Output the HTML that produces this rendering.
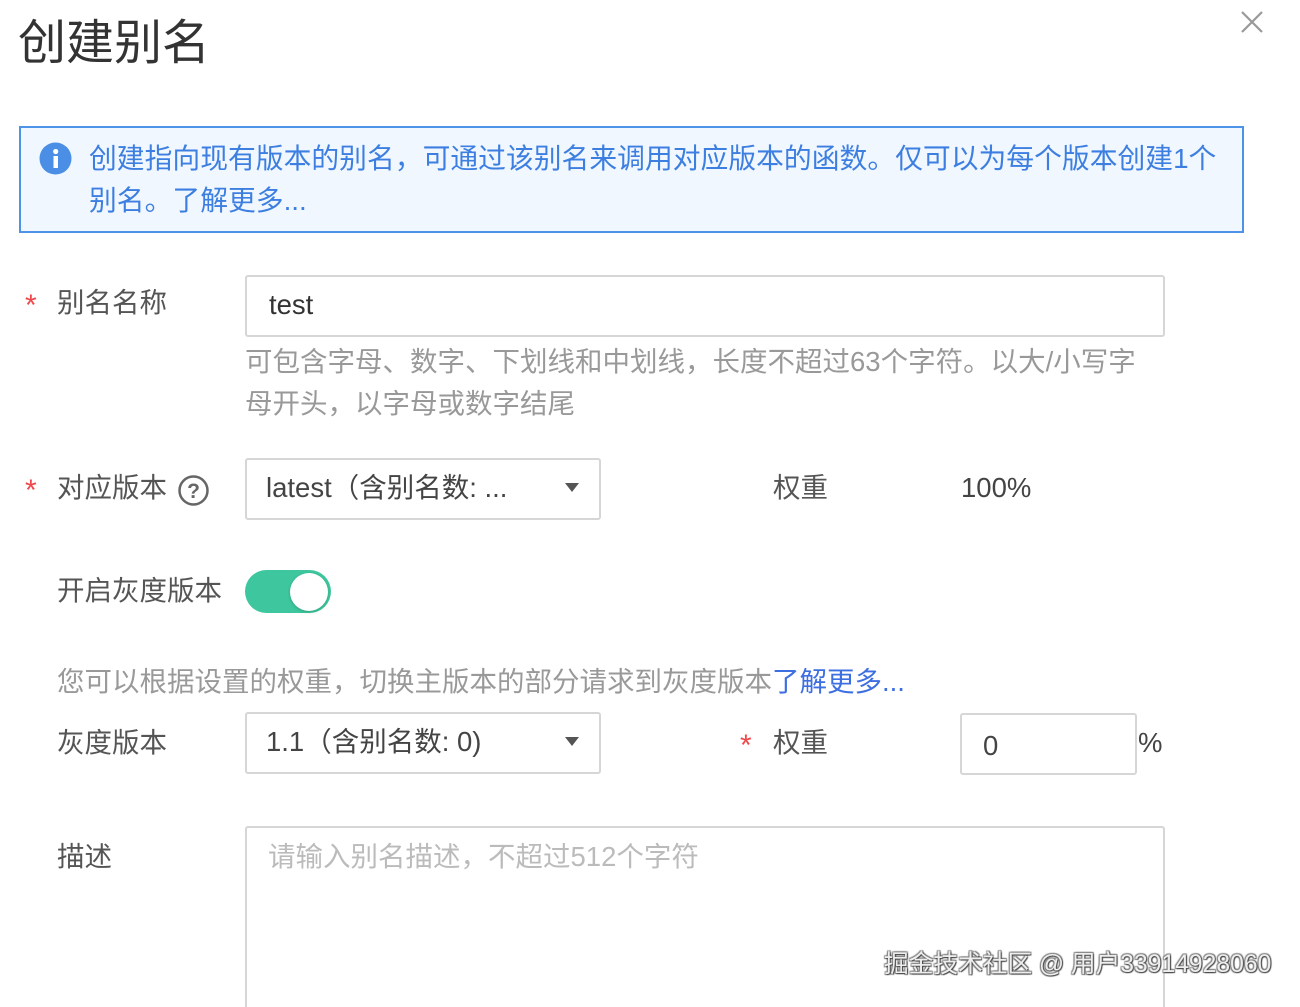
<!DOCTYPE html>
<html><head><meta charset="utf-8"><style>
*{margin:0;padding:0;box-sizing:border-box}
html,body{width:1300px;height:1007px;overflow:hidden}
body{background:#fff;position:relative;font-family:"Liberation Sans","Noto Sans CJK SC",sans-serif;color:#555;font-size:27.5px}
.a{position:absolute;white-space:nowrap;line-height:1}
.box{position:absolute;border:2px solid #d6d6d6;border-radius:3px;background:#fff}
.star{color:#f0474b;font-size:30px}
.tri{position:absolute;width:0;height:0;border-left:7px solid transparent;border-right:7px solid transparent;border-top:9px solid #555}
</style></head><body>
<div class="a" style="left:18px;top:20px;font-size:48px;color:#333">创建别名</div>
<svg class="a" style="left:1240px;top:10px" width="24" height="24"><path d="M2 2L22 22M22 2L2 22" stroke="#999" stroke-width="2.2"/></svg>
<div style="position:absolute;left:19px;top:126px;width:1225px;height:107px;border:2px solid #4d94e8;background:#f1f7ff"></div>
<svg class="a" style="left:39px;top:142px" width="33" height="33"><circle cx="16.5" cy="16.5" r="16" fill="#4a8ee6"/><rect x="14.5" y="14" width="4.5" height="12" fill="#fff"/><circle cx="16.7" cy="9.5" r="2.6" fill="#fff"/></svg>
<div class="a" style="left:89px;top:145px;font-size:27.8px;color:#3d7fe0">创建指向现有版本的别名，可通过该别名来调用对应版本的函数。仅可以为每个版本创建1个</div>
<div class="a" style="left:89px;top:187px;font-size:27.8px;color:#3d7fe0">别名。了解更多...</div>

<div class="a star" style="left:25px;top:291px">*</div>
<div class="a" style="left:57px;top:289px">别名名称</div>
<div class="box" style="left:245px;top:275px;width:920px;height:62px"></div>
<div class="a" style="left:269px;top:291px;color:#333">test</div>
<div class="a" style="left:245px;top:348px;color:#999">可包含字母、数字、下划线和中划线，长度不超过63个字符。以大/小写字</div>
<div class="a" style="left:245px;top:390px;color:#999">母开头，以字母或数字结尾</div>

<div class="a star" style="left:25px;top:476px">*</div>
<div class="a" style="left:57px;top:474px">对应版本</div>
<svg class="a" style="left:177px;top:474px" width="33" height="33"><circle cx="16.5" cy="16.5" r="14" fill="none" stroke="#666" stroke-width="2.5"/><text x="16.5" y="24" text-anchor="middle" font-size="21" font-weight="bold" fill="#666" font-family="Liberation Sans">?</text></svg>
<div class="box" style="left:245px;top:458px;width:356px;height:62px"></div>
<div class="a" style="left:266px;top:474px;color:#444">latest（含别名数: ...</div>
<div class="tri" style="left:565px;top:483px"></div>
<div class="a" style="left:773px;top:474px">权重</div>
<div class="a" style="left:961px;top:474px;color:#444">100%</div>

<div class="a" style="left:57px;top:577px">开启灰度版本</div>
<div style="position:absolute;left:245px;top:570px;width:86px;height:43px;border-radius:22px;background:#3ec79e"></div>
<div style="position:absolute;left:290px;top:573px;width:38px;height:38px;border-radius:50%;background:#fff;box-shadow:0 1px 3px rgba(0,0,0,.2)"></div>

<div class="a" style="left:57px;top:668px;color:#999">您可以根据设置的权重，切换主版本的部分请求到灰度版本<span style="color:#3d6fe0">了解更多...</span></div>

<div class="a" style="left:57px;top:729px">灰度版本</div>
<div class="box" style="left:245px;top:712px;width:356px;height:62px"></div>
<div class="a" style="left:266px;top:728px;color:#444">1.1（含别名数: 0)</div>
<div class="tri" style="left:565px;top:737px"></div>
<div class="a star" style="left:740px;top:731px">*</div>
<div class="a" style="left:773px;top:729px">权重</div>
<div class="box" style="left:960px;top:713px;width:177px;height:62px"></div>
<div class="a" style="left:983px;top:732px;color:#444">0</div>
<div class="a" style="left:1138px;top:729px;color:#444">%</div>

<div class="a" style="left:57px;top:843px">描述</div>
<div class="box" style="left:245px;top:826px;width:920px;height:181px;border-bottom:none;border-radius:3px 3px 0 0"></div>
<div class="a" style="left:268px;top:843px;color:#bbb">请输入别名描述，不超过512个字符</div>

<div class="a" style="left:884px;top:953px;font-size:24.7px;color:#eee;text-shadow:1px 1px 1px #444,-1px -1px 1px #888,1px -1px 1px #777,-1px 1px 1px #777">掘金技术社区 @ 用户33914928060</div>
</body></html>
